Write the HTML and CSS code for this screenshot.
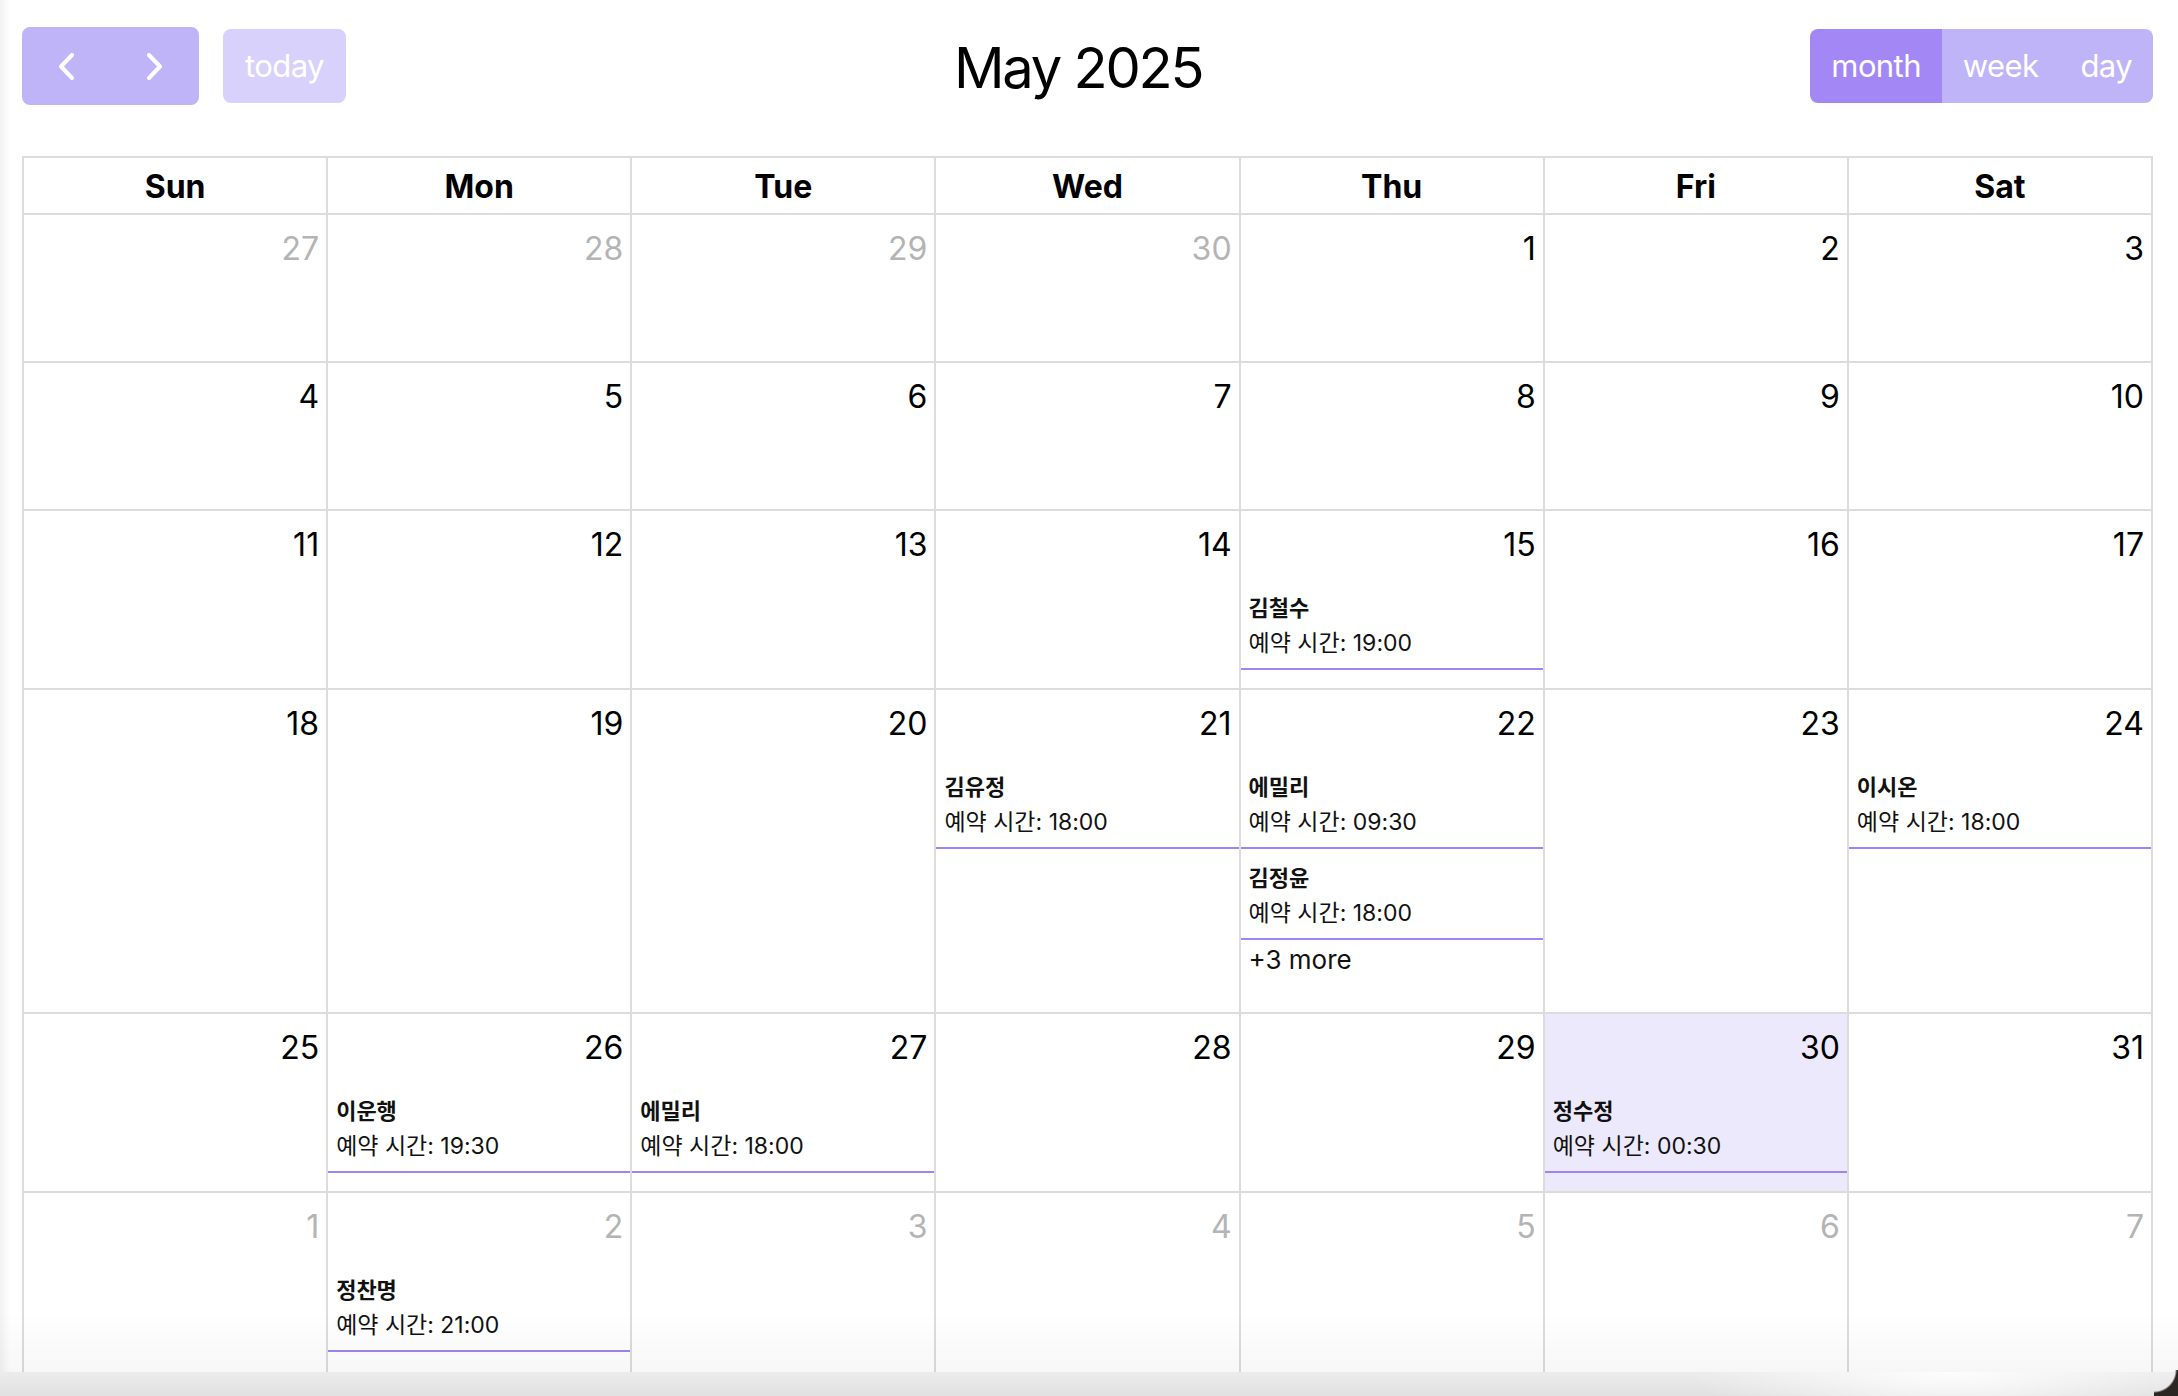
FILE: index.html
```html
<!DOCTYPE html>
<html lang="ko">
<head>
<meta charset="utf-8">
<title>Calendar</title>
<link rel="stylesheet" href="styles.css">
</head>
<body>
<div class="cal">
  <div class="toolbar">
    <div class="chunk">
      <div class="btn-group nav">
        <button class="btn nav-btn" aria-label="prev">
          <svg width="17" height="27" viewBox="0 0 17 27"><path d="M14 2 L3 13.5 L14 25" fill="none" stroke="#fff" stroke-width="4" stroke-linecap="round" stroke-linejoin="round"/></svg>
        </button>
        <button class="btn nav-btn" aria-label="next">
          <svg width="17" height="27" viewBox="0 0 17 27"><path d="M3 2 L14 13.5 L3 25" fill="none" stroke="#fff" stroke-width="4" stroke-linecap="round" stroke-linejoin="round"/></svg>
        </button>
      </div>
      <button class="btn today">today</button>
    </div>
    <h2 class="title">May 2025</h2>
    <div class="btn-group views">
      <button class="btn view active">month</button>
      <button class="btn view">week</button>
      <button class="btn view">day</button>
    </div>
  </div>

  <div class="grid">
    <div class="hd">Sun</div><div class="hd">Mon</div><div class="hd">Tue</div><div class="hd">Wed</div><div class="hd">Thu</div><div class="hd">Fri</div><div class="hd">Sat</div>

    <div class="day other"><div class="num">27</div></div>
    <div class="day other"><div class="num">28</div></div>
    <div class="day other"><div class="num">29</div></div>
    <div class="day other"><div class="num">30</div></div>
    <div class="day"><div class="num">1</div></div>
    <div class="day"><div class="num">2</div></div>
    <div class="day"><div class="num">3</div></div>

    <div class="day"><div class="num">4</div></div>
    <div class="day"><div class="num">5</div></div>
    <div class="day"><div class="num">6</div></div>
    <div class="day"><div class="num">7</div></div>
    <div class="day"><div class="num">8</div></div>
    <div class="day"><div class="num">9</div></div>
    <div class="day"><div class="num">10</div></div>

    <div class="day"><div class="num">11</div></div>
    <div class="day"><div class="num">12</div></div>
    <div class="day"><div class="num">13</div></div>
    <div class="day"><div class="num">14</div></div>
    <div class="day"><div class="num">15</div>
      <div class="ev"><div class="ev-name">김철수</div><div class="ev-time">예약 시간: 19:00</div></div>
    </div>
    <div class="day"><div class="num">16</div></div>
    <div class="day"><div class="num">17</div></div>

    <div class="day"><div class="num">18</div></div>
    <div class="day"><div class="num">19</div></div>
    <div class="day"><div class="num">20</div></div>
    <div class="day"><div class="num">21</div>
      <div class="ev"><div class="ev-name">김유정</div><div class="ev-time">예약 시간: 18:00</div></div>
    </div>
    <div class="day"><div class="num">22</div>
      <div class="ev"><div class="ev-name">에밀리</div><div class="ev-time">예약 시간: 09:30</div></div>
      <div class="ev"><div class="ev-name">김정윤</div><div class="ev-time">예약 시간: 18:00</div></div>
      <div class="more">+3 more</div>
    </div>
    <div class="day"><div class="num">23</div></div>
    <div class="day"><div class="num">24</div>
      <div class="ev"><div class="ev-name">이시온</div><div class="ev-time">예약 시간: 18:00</div></div>
    </div>

    <div class="day"><div class="num">25</div></div>
    <div class="day"><div class="num">26</div>
      <div class="ev"><div class="ev-name">이운행</div><div class="ev-time">예약 시간: 19:30</div></div>
    </div>
    <div class="day"><div class="num">27</div>
      <div class="ev"><div class="ev-name">에밀리</div><div class="ev-time">예약 시간: 18:00</div></div>
    </div>
    <div class="day"><div class="num">28</div></div>
    <div class="day"><div class="num">29</div></div>
    <div class="day today-cell"><div class="num">30</div>
      <div class="ev"><div class="ev-name">정수정</div><div class="ev-time">예약 시간: 00:30</div></div>
    </div>
    <div class="day"><div class="num">31</div></div>

    <div class="day other"><div class="num">1</div></div>
    <div class="day other"><div class="num">2</div>
      <div class="ev"><div class="ev-name">정찬명</div><div class="ev-time">예약 시간: 21:00</div></div>
    </div>
    <div class="day other"><div class="num">3</div></div>
    <div class="day other"><div class="num">4</div></div>
    <div class="day other"><div class="num">5</div></div>
    <div class="day other"><div class="num">6</div></div>
    <div class="day other"><div class="num">7</div></div>
  </div>
</div>

<div class="edge-left"></div>
<div class="fade-bottom"></div>
<div class="strip-bottom"></div>
<div class="corner"></div>
</body>
</html>
```

FILE: styles.css
```css
html, body {
  margin: 0;
  padding: 0;
  background: #ffffff;
  overflow: hidden;
  height: 100%;
}

body {
  font-family: "Inter", "Noto Sans CJK KR", sans-serif;
  color: #000;
}

.cal {
  padding: 27px 25px 0 22px;
}

.toolbar {
  display: flex;
  justify-content: space-between;
  align-items: center;
  height: 78px;
  margin-bottom: 51px;
}

.chunk {
  display: flex;
  align-items: center;
  gap: 24px;
}

.btn {
  border: none;
  margin: 0;
  font-family: inherit;
  font-size: 31px;
  letter-spacing: -0.6px;
  color: #fff;
  background: #c0b4f8;
  padding: 0 21px;
  height: 74px;
  line-height: 74px;
  display: flex;
  align-items: center;
  justify-content: center;
}

.btn-group {
  display: flex;
  border-radius: 8px;
  overflow: hidden;
}

.nav {
  height: 78px;
}

.nav-btn {
  width: 88.5px;
  height: 78px;
  padding: 0;
}

.today {
  width: 123px;
  padding: 0;
  border-radius: 8px;
  background: #d8d1fb;
}

.title {
  margin: 0;
  padding-top: 4px;
  font-size: 56px;
  font-weight: 400;
  line-height: 70px;
  letter-spacing: -2.2px;
}

.view.active {
  background: #a387f5;
}

.grid {
  display: grid;
  grid-template-columns: repeat(7, 1fr);
  grid-template-rows: 57px 148px 148px 179px 324px 179px 220px;
  border-top: 2px solid #dcdcdc;
  border-left: 2px solid #dcdcdc;
}

.hd, .day {
  border-right: 2px solid #dcdcdc;
  border-bottom: 2px solid #dcdcdc;
  min-width: 0;
}

.hd {
  text-align: center;
  font-weight: 700;
  font-size: 32px;
  line-height: 53px;
  padding-top: 2px;
}

.day {
  display: flex;
  flex-direction: column;
}

.num {
  height: 68px;
  box-sizing: border-box;
  padding: 14px 7px 14px 8px;
  text-align: right;
  font-size: 32px;
  line-height: 40px;
}

.other .num {
  color: #b4b4b4;
}

.today-cell {
  background: #ece9fd;
}

.ev {
  padding: 12px 8px 7px 8px;
  border-bottom: 2px solid #a084f0;
  font-size: 23px;
  line-height: 35px;
  color: #111;
}

.ev-name {
  font-weight: 700;
  font-size: 22px;
}

.more {
  margin-top: 2px;
  padding-left: 8px;
  font-size: 26px;
  line-height: 36px;
  color: #111;
}

.edge-left {
  position: fixed;
  left: 0;
  top: 0;
  bottom: 0;
  width: 10px;
  background: linear-gradient(to right, rgba(0,0,0,0.05), rgba(0,0,0,0));
  pointer-events: none;
}

.fade-bottom {
  position: fixed;
  left: 0;
  right: 0;
  bottom: 24px;
  height: 60px;
  background: linear-gradient(to bottom, rgba(0,0,0,0), rgba(0,0,0,0.03));
  pointer-events: none;
}

.strip-bottom {
  position: fixed;
  left: 0;
  right: 0;
  bottom: 0;
  height: 24px;
  background:
    radial-gradient(ellipse 260px 60px at 1950px 0px, rgba(255,255,255,0.9), rgba(255,255,255,0)),
    linear-gradient(to bottom, #ececec, #e1e1e1);
}

.corner {
  position: fixed;
  right: 0;
  bottom: 0;
  width: 24px;
  height: 26px;
  background: radial-gradient(circle at 0 0, rgba(0,0,0,0) 21px, #2b2624 23px);
}
```
